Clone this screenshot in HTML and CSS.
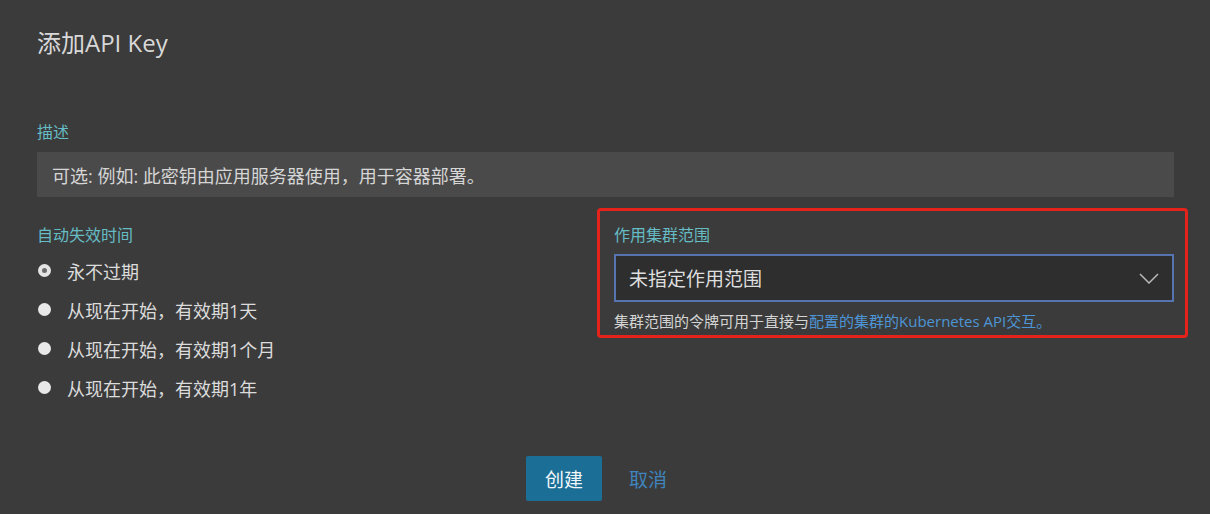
FILE: index.html
```html
<!DOCTYPE html>
<html lang="zh-CN">
<head>
<meta charset="utf-8">
<title>添加API Key</title>
<link rel="stylesheet" href="styles.css">
</head>
<body>
<div class="page">
  <h1 class="title">添加API Key</h1>

  <div class="field">
    <label class="label">描述</label>
    <div class="text-input">可选: 例如: 此密钥由应用服务器使用，用于容器部署。</div>
  </div>

  <div class="columns">
    <div class="col">
      <div class="label">自动失效时间</div>
      <ul class="radios">
        <li class="radio checked"><span class="dot"></span>永不过期</li>
        <li class="radio"><span class="dot"></span>从现在开始，有效期1天</li>
        <li class="radio"><span class="dot"></span>从现在开始，有效期1个月</li>
        <li class="radio"><span class="dot"></span>从现在开始，有效期1年</li>
      </ul>
    </div>
    <div class="col scope">
      <div class="label">作用集群范围</div>
      <div class="select">
        <span>未指定作用范围</span>
        <svg class="chev" width="20" height="11" viewBox="0 0 20 11"><path d="M1 1 L10 10 L19 1" fill="none" stroke="#b8b8b8" stroke-width="1.5"/></svg>
      </div>
      <p class="help">集群范围的令牌可用于直接与<a class="link">配置的集群的Kubernetes API交互。</a></p>
    </div>
  </div>

  <div class="actions">
    <button class="btn primary">创建</button>
    <button class="btn cancel">取消</button>
  </div>
</div>
</body>
</html>
```

FILE: styles.css
```css
html, body {
  margin: 0;
  padding: 0;
  background: #3b3b3b;
  height: 100%;
}
body {
  font-family: "Open Sans", "Noto Sans CJK SC", "Liberation Sans", sans-serif;
  color: #d4d4d4;
}
.page {
  padding: 0 36px 0 37px;
}
.title {
  margin: 29px 0 0;
  font-size: 24px;
  line-height: 28px;
  font-weight: 400;
  color: #d8d8d8;
}
.field {
  margin-top: 64px;
}
.label {
  display: block;
  font-size: 16px;
  line-height: 22px;
  color: #66bcc4;
}
.text-input {
  margin-top: 9px;
  height: 45px;
  box-sizing: border-box;
  padding-left: 15px;
  display: flex;
  align-items: center;
  background: #4a4a4a;
  font-size: 18px;
  color: #d6d6d6;
}
.columns {
  margin-top: 27px;
  display: grid;
  grid-template-columns: 560px 560px;
  column-gap: 17px;
  align-items: start;
}
.radios {
  list-style: none;
  margin: 5px 0 0;
  padding: 0;
}
.radio {
  height: 39px;
  display: flex;
  align-items: center;
  font-size: 18px;
  color: #dcdcdc;
}
.dot {
  width: 13px;
  height: 13px;
  border-radius: 50%;
  background: #e8e8e8;
  margin: 0 16px 0 1px;
  box-sizing: border-box;
  flex: none;
}
.radio.checked .dot {
  background: #6a6a6a;
  border: 4px solid #e4e4e4;
}
.scope {
  position: relative;
}
.scope::before {
  content: "";
  position: absolute;
  left: -17px;
  right: -14px;
  top: -16px;
  bottom: -7px;
  border: 3px solid #e5231b;
  border-radius: 4px;
  pointer-events: none;
}
.select {
  margin-top: 8px;
  height: 48px;
  box-sizing: border-box;
  border: 2px solid #5674b0;
  background: #2e2e2e;
  display: flex;
  align-items: center;
  justify-content: space-between;
  padding: 0 13px 0 13px;
  font-size: 19px;
  color: #dedede;
}
.help {
  margin: 9px 0 0;
  font-size: 15px;
  line-height: 20px;
  color: #d4d4d4;
}
.link {
  color: #4d95d6;
}
.actions {
  margin-top: 49px;
  display: flex;
  justify-content: center;
  gap: 8px;
  padding-left: 1px;
}
.btn {
  width: 76px;
  height: 45px;
  border: none;
  border-radius: 2px;
  font-family: inherit;
  font-size: 19px;
  background: transparent;
  padding: 0;
}
.btn.primary {
  background: #1b6e96;
  color: #f0f6fa;
}
.btn.cancel {
  color: #3f84bd;
}
```
